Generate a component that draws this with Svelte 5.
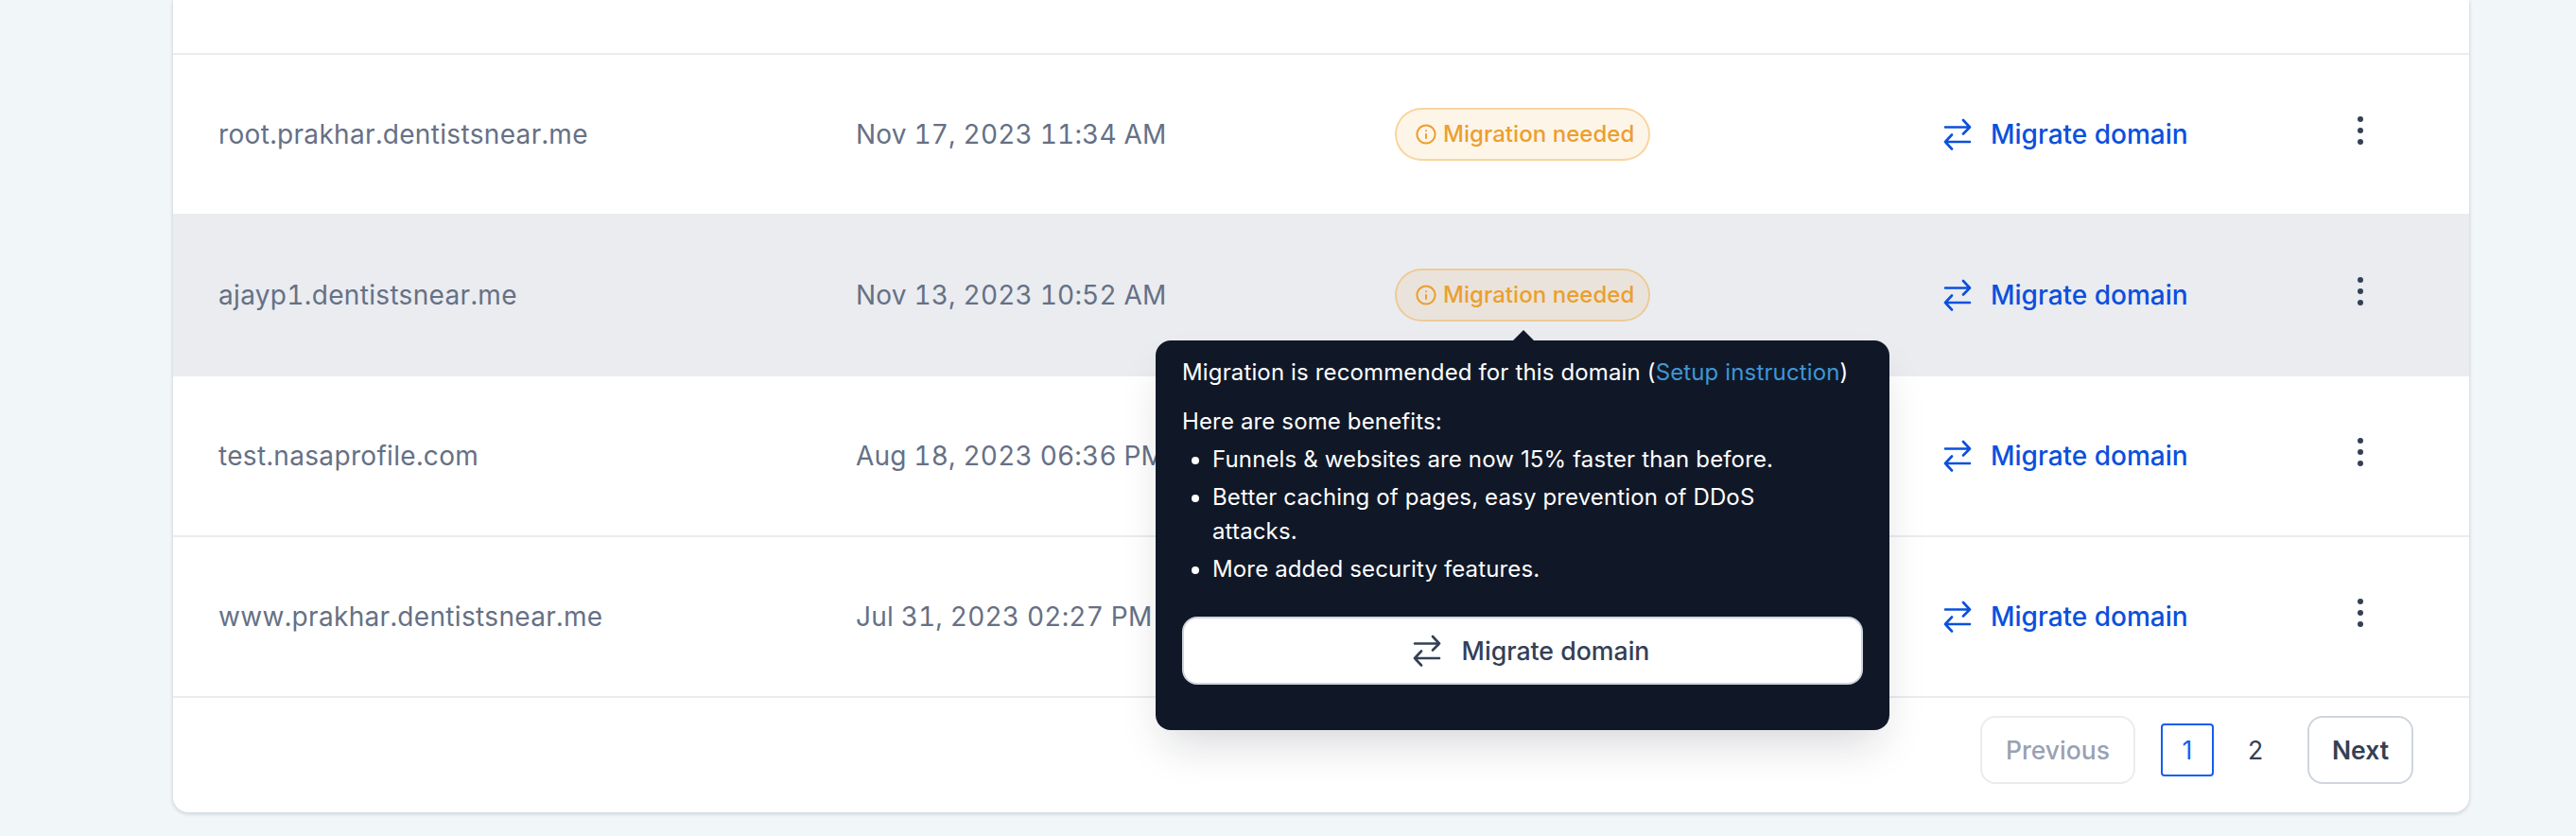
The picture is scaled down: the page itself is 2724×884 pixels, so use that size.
<script>
  const rows = [
    { domain: 'root.prakhar.dentistsnear.me', date: 'Nov 17, 2023 11:34 AM' },
    { domain: 'ajayp1.dentistsnear.me', date: 'Nov 13, 2023 10:52 AM', active: true },
    { domain: 'test.nasaprofile.com', date: 'Aug 18, 2023 06:36 PM' },
    { domain: 'www.prakhar.dentistsnear.me', date: 'Jul 31, 2023 02:27 PM' }
  ];
</script>

{#snippet swap(cls)}
  <svg class={cls} viewBox="0 0 30 34" fill="none" stroke="currentColor" stroke-width="2.6" stroke-linecap="round" stroke-linejoin="round" aria-hidden="true">
    <path d="M2 9.5H28M21 2l7 7.5-7 7M28 25H2M9 17.5 2 25l7 7.5" />
  </svg>
{/snippet}

<div class="page">
  <div class="card">
    <div class="top"></div>
    {#each rows as row}
      <div class="row" class:active={row.active}>
        <div class="domain">{row.domain}</div>
        <div class="date">{row.date}</div>
        <div class="status">
          <span class="badge">
            <svg viewBox="0 0 22 22" fill="none" stroke="currentColor" stroke-width="2" stroke-linecap="round" aria-hidden="true">
              <circle cx="11" cy="11" r="9.6" />
              <path d="M11 15v-4M11 7.2v.1" />
            </svg>
            Migration needed
          </span>
          {#if row.active}
            <div class="tooltip">
              <span class="arrow"></span>
              <p class="lead">Migration is recommended for this domain (<span class="link">Setup instruction</span>)</p>
              <p class="sub">Here are some benefits:</p>
              <ul>
                <li>Funnels &amp; websites are now 15% faster than before.</li>
                <li>Better caching of pages, easy prevention of DDoS attacks.</li>
                <li>More added security features.</li>
              </ul>
              <button class="tip-btn">{@render swap('ic-btn')}Migrate domain</button>
            </div>
          {/if}
        </div>
        <div class="action">{@render swap('ic')}<span>Migrate domain</span></div>
        <div class="more"><i></i><i></i><i></i></div>
      </div>
    {/each}
    <div class="pager">
      <button class="pg prev">Previous</button>
      <span class="num current">1</span>
      <span class="num">2</span>
      <button class="pg next">Next</button>
    </div>
  </div>
</div>

<style>
  :global(body) {
    margin: 0;
    background: #f1f6f9;
    overflow: hidden;
  }
  .page {
    height: 884px;
    padding-left: 183px;
    box-sizing: border-box;
    font-family: Inter, "Liberation Sans", sans-serif;
  }
  .card {
    width: 2428px;
    background: #fff;
    border-radius: 0 0 16px 16px;
    box-shadow: 0 2px 4px rgba(16, 24, 40, 0.12), 0 0 4px rgba(16, 24, 40, 0.08);
  }
  .top {
    height: 56px;
  }
  .row {
    display: grid;
    grid-template-columns: 674px 570px 580px 428px 1fr;
    align-items: center;
    height: 168px;
    border-top: 2px solid #eaecf0;
    padding-left: 48px;
    color: #667085;
    font-size: 28px;
    line-height: 40px;
  }
  .row.active {
    background: #eaecf0;
  }
  .domain {
    font-variant-numeric: tabular-nums;
    letter-spacing: 0.33px;
  }
  .date {
    font-variant-numeric: tabular-nums;
    letter-spacing: 0.2px;
  }
  .status {
    position: relative;
  }
  .badge {
    display: inline-flex;
    align-items: center;
    gap: 7px;
    height: 56px;
    box-sizing: border-box;
    padding: 0 15px 0 20px;
    border: 2px solid rgba(243, 167, 56, 0.42);
    border-radius: 28px;
    background: rgba(247, 144, 9, 0.09);
    color: #eb9f2e;
    font-size: 24px;
    font-weight: 450;
    letter-spacing: 0.05px;
    line-height: 36px;
  }
  .badge svg {
    width: 22px;
    height: 22px;
  }
  .tooltip {
    position: absolute;
    z-index: 2;
    left: -253px;
    top: 76px;
    width: 776px;
    box-sizing: border-box;
    padding: 16px 28px 48px;
    border-radius: 16px;
    background: #101828;
    color: #fff;
    font-size: 24px;
    letter-spacing: 0.14px;
    line-height: 36px;
    box-shadow: 0 24px 48px -12px rgba(16, 24, 40, 0.18);
  }
  .arrow {
    position: absolute;
    left: 378px;
    top: -11px;
    border-left: 11px solid transparent;
    border-right: 11px solid transparent;
    border-bottom: 11px solid #101828;
  }
  .lead, .sub {
    margin: 0;
  }
  .sub {
    margin-top: 16px;
  }
  .link {
    color: #3f96d4;
  }
  ul {
    margin: 4px 0 0;
    padding: 0 56px 0 32px;
  }
  li + li {
    margin-top: 4px;
  }
  .tip-btn {
    display: flex;
    align-items: center;
    justify-content: center;
    gap: 22px;
    width: 100%;
    height: 72px;
    margin-top: 32px;
    padding: 0 0 0 18px;
    box-sizing: border-box;
    border: 2px solid #d0d5dd;
    border-radius: 16px;
    background: #fff;
    color: #344054;
    font: 500 26.7px/40px Inter, "Liberation Sans", sans-serif;
  }
  .ic-btn {
    width: 30px;
    height: 34px;
  }
  .action {
    display: flex;
    align-items: center;
    gap: 20px;
    color: #0b50dd;
    font-weight: 500;
  }
  .ic {
    width: 30px;
    height: 34px;
  }
  .more {
    display: flex;
    flex-direction: column;
    gap: 6px;
    align-self: start;
    width: 6px;
    margin: 65px 0 0 10px;
  }
  .more i {
    width: 6px;
    height: 6px;
    border-radius: 50%;
    background: #344054;
  }
  .pager {
    display: flex;
    align-items: center;
    justify-content: flex-end;
    height: 110px;
    padding: 0 59px 11px 0;
    border-top: 2px solid #eaecf0;
    color: #344054;
    font-size: 26.5px;
  }
  .pg {
    height: 72px;
    box-sizing: border-box;
    border: 2px solid #d0d5dd;
    border-radius: 16px;
    background: #fff;
    color: #344054;
    font: 600 26.5px/40px Inter, "Liberation Sans", sans-serif;
  }
  .prev {
    width: 164px;
    border-color: #eaecf0;
    color: #98a2b3;
    font-weight: 500;
  }
  .next {
    width: 112px;
  }
  .num {
    display: grid;
    place-items: center;
    width: 56px;
    height: 56px;
    box-sizing: border-box;
    margin-left: 27px;
    border-radius: 4px;
  }
  .num + .num {
    margin-left: 16px;
    margin-right: 27px;
  }
  .current {
    border: 2px solid #155eef;
    color: #155eef;
  }
</style>
